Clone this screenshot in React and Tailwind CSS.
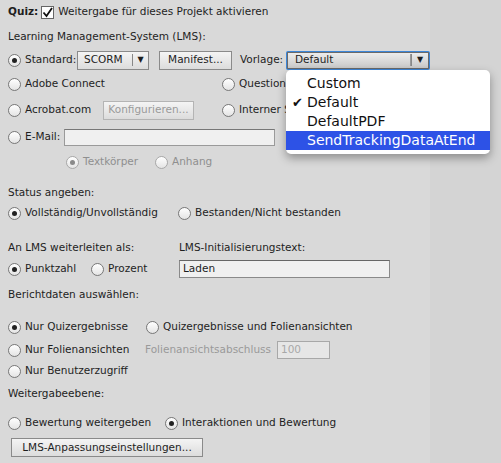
import React from 'react';

const font = { fontFamily: '"DejaVu Sans", "Liberation Sans", sans-serif' };

function Radio({ checked, disabled }) {
  return (
    <span className={`relative inline-flex items-center justify-center w-[13px] h-[13px] rounded-full border shrink-0 bg-[linear-gradient(#ffffff,#e4e4e4)] ${disabled ? 'border-[#a8a8a8]' : 'border-[#777]'}`}>
      {checked && <span className={`w-[5px] h-[5px] rounded-full ${disabled ? 'bg-[#8a8a8a]' : 'bg-[#222]'}`} />}
    </span>
  );
}

function RadioLabel({ checked, disabled, children, className = '' }) {
  return (
    <span className={`inline-flex items-center gap-[4px] shrink-0 whitespace-nowrap ${disabled ? 'text-[#8f8f8f]' : ''} ${className}`}>
      <Radio checked={checked} disabled={disabled} />
      <span>{children}</span>
    </span>
  );
}

function Button({ children, disabled, className = '' }) {
  return (
    <span className={`inline-flex items-center justify-center shrink-0 h-[19px] border bg-[linear-gradient(#f4f4f4,#dcdcdc)] ${disabled ? 'border-[#b4b4b4] text-[#9a9a9a]' : 'border-[#8a8a8a]'} ${className}`}>
      {children}
    </span>
  );
}

function Row({ children, className = '' }) {
  return <div className={`flex items-center h-[20px] ${className}`}>{children}</div>;
}

export default function App() {
  return (
    <div style={font} className="relative w-[501px] h-[463px] overflow-hidden text-[10.5px] text-[#1e1e1e] bg-[linear-gradient(to_right,#d9d9d9_430px,#d4d4d4_430px)] pl-[8px]">
      <Row className="mt-[2px]">
        <b className="font-bold">Quiz:</b>
        <span className="ml-[3px] mr-[4px] inline-flex items-center justify-center w-[13px] h-[13px] border border-[#666] bg-white">
          <svg width="11" height="11" viewBox="0 0 11 11"><path d="M1.5 5.5 L4.5 9 L10 1" fill="none" stroke="#111" strokeWidth="1.8" /></svg>
        </span>
        <span>Weitergabe für dieses Projekt aktivieren</span>
      </Row>
      <Row className="mt-[5px]">Learning Management-System (LMS):</Row>

      <Row className="mt-[3px]">
        <RadioLabel checked className="w-[69px]">Standard:</RadioLabel>
        <span className="inline-flex items-center h-[19px] w-[72px] border border-[#8a8a8a] bg-[linear-gradient(#f4f4f4,#dcdcdc)]">
          <span className="flex-1 pl-[6px]">SCORM</span>
          <span className="h-[12px] w-px bg-[#888]" />
          <span className="w-[15px] text-center text-[8px]">▼</span>
        </span>
        <Button className="ml-[10px] w-[73px]">Manifest...</Button>
        <span className="ml-[8px] w-[46px]">Vorlage:</span>
        <span className="p-[1px] rounded-[2px] bg-[#3c86d8]">
          <span className="flex items-center h-[17px] w-[142px] border border-[#6a6a6a] bg-[linear-gradient(#ececec,#c9c9c9)]">
            <span className="flex-1 pl-[7px]">Default</span>
            <span className="h-[12px] w-[2px] border-x border-[#888] border-l-[#999] bg-[#eee]" />
            <span className="w-[16px] text-center text-[8px]">▼</span>
          </span>
        </span>
      </Row>

      <Row className="mt-[4px]">
        <RadioLabel className="w-[214px]">Adobe Connect</RadioLabel>
        <RadioLabel>Questionnaire</RadioLabel>
      </Row>

      <Row className="mt-[6px]">
        <RadioLabel className="w-[95px]">Acrobat.com</RadioLabel>
        <Button disabled className="w-[91px]">Konfigurieren...</Button>
        <RadioLabel className="ml-[28px]">Interner Server</RadioLabel>
      </Row>

      <Row className="mt-[7px]">
        <RadioLabel className="w-[56px]">E-Mail:</RadioLabel>
        <span className="h-[17px] w-[211px] border border-[#9a9a9a] border-t-[#777] bg-[#f0f0f0]" />
      </Row>

      <Row className="mt-[5px] pl-[58px]">
        <RadioLabel checked disabled className="w-[89px]">Textkörper</RadioLabel>
        <RadioLabel disabled>Anhang</RadioLabel>
      </Row>

      <Row className="mt-[11px]">Status angeben:</Row>
      <Row>
        <RadioLabel checked className="w-[170px]">Vollständig/Unvollständig</RadioLabel>
        <RadioLabel>Bestanden/Nicht bestanden</RadioLabel>
      </Row>

      <Row className="mt-[15px]">
        <span className="w-[171px]">An LMS weiterleiten als:</span>
        <span>LMS-Initialisierungstext:</span>
      </Row>
      <Row className="mt-[1px]">
        <RadioLabel checked className="w-[83px]">Punktzahl</RadioLabel>
        <RadioLabel className="w-[88px]">Prozent</RadioLabel>
        <span className="flex items-center h-[18px] w-[211px] border border-[#8a8a8a] border-t-[#666] bg-[#f0f0f0] pl-[3px]">Laden</span>
      </Row>

      <Row className="mt-[6px]">Berichtdaten auswählen:</Row>

      <Row className="mt-[12px]">
        <RadioLabel checked className="w-[138px]">Nur Quizergebnisse</RadioLabel>
        <RadioLabel>Quizergebnisse und Folienansichten</RadioLabel>
      </Row>
      <Row className="mt-[3px]">
        <RadioLabel className="w-[137px]">Nur Folienansichten</RadioLabel>
        <span className="w-[132px] text-[#9a9a9a]">Folienansichtsabschluss</span>
        <span className="flex items-center h-[18px] w-[53px] border border-[#a8a8a8] bg-[#e6e6e6] pl-[3px] text-[#a8a8a8]">100</span>
      </Row>
      <Row className="mt-[1px]">
        <RadioLabel>Nur Benutzerzugriff</RadioLabel>
      </Row>
      <Row className="mt-[3px]">Weitergabeebene:</Row>

      <Row className="mt-[9px]">
        <RadioLabel className="w-[157px]">Bewertung weitergeben</RadioLabel>
        <RadioLabel checked>Interaktionen und Bewertung</RadioLabel>
      </Row>
      <div className="mt-[5px] pl-[3px]">
        <Button className="w-[192px]">LMS-Anpassungseinstellungen...</Button>
      </div>

      <div className="absolute left-[286px] top-[70px] w-[204px] rounded-[5px] bg-white shadow-[0_4px_10px_rgba(0,0,0,0.35)] py-[4px] text-[14px] text-[#111] leading-[19px]">
        <div className="pl-[21px]">Custom</div>
        <div className="relative pl-[21px]">
          <span className="absolute left-[6px] text-[13px]">✔</span>Default
        </div>
        <div className="pl-[21px]">DefaultPDF</div>
        <div className="pl-[21px] bg-[#2d52e6] text-white">SendTrackingDataAtEnd</div>
      </div>
    </div>
  );
}
